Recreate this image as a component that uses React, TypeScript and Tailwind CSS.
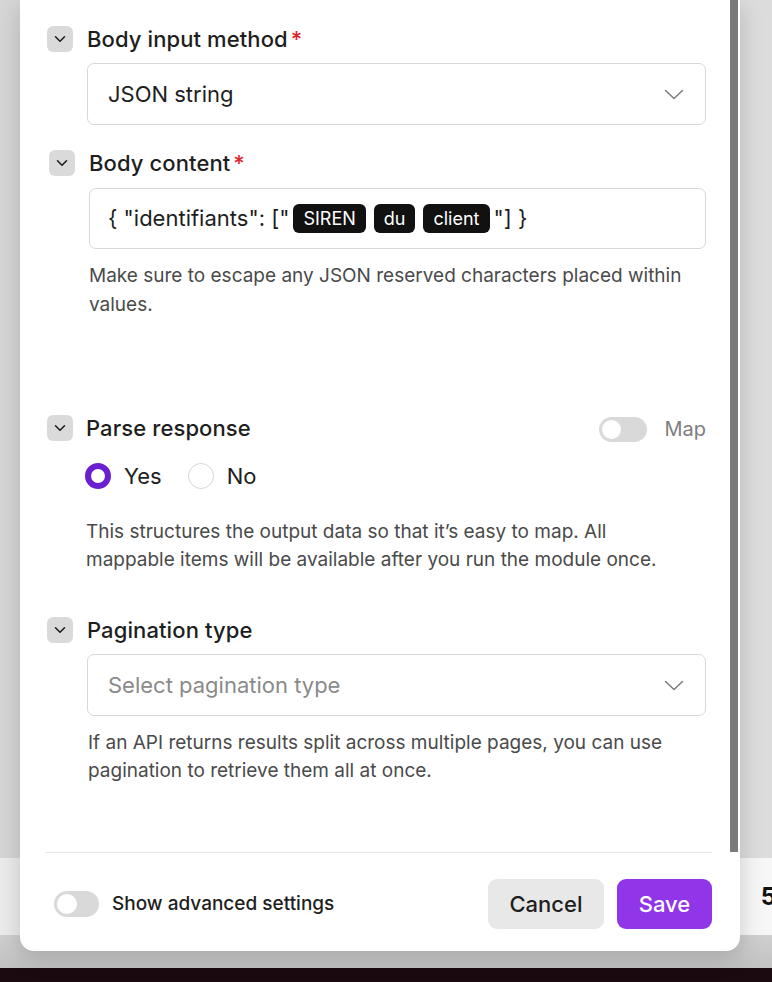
import React from "react";

const font = { fontFamily: "Inter, 'Noto Sans', sans-serif" };

function Caret() {
    return (
        <div className="w-[26px] h-[26px] rounded-[6px] bg-[#dadada] flex items-center justify-center shrink-0">
            <svg width="12" height="8" viewBox="0 0 12 8" fill="none">
                <path d="M1.5 1.75L6 6.25L10.5 1.75" stroke="#1f1f1f" strokeWidth="1.6" strokeLinecap="round" strokeLinejoin="round" />
            </svg>
        </div>
    );
}

function SelectChevron() {
    return (
        <svg width="20" height="11" viewBox="0 0 20 11" fill="none">
            <path d="M1.5 1.5L10 9.5L18.5 1.5" stroke="#7a7a7a" strokeWidth="1.5" strokeLinecap="round" strokeLinejoin="round" />
        </svg>
    );
}

function Header({ label, required, className = "" }: { label: string; required?: boolean; className?: string }) {
    return (
        <div className={`flex items-center h-[26px] gap-[14px] ${className}`}>
            <Caret />
            <span className="text-[22px] font-medium text-[#1e1e1e] leading-none tracking-[0.1px]">
                {label}
                {required && <span className="text-[#e0242b] ml-[3px]">*</span>}
            </span>
        </div>
    );
}

function Chip({ children }: { children: React.ReactNode }) {
    return (
        <span className="inline-flex items-center h-[29px] px-[10px] rounded-[6px] bg-[#111111] text-white text-[18px] mx-[4px]">
            {children}
        </span>
    );
}

function Toggle({ className = "" }: { className?: string }) {
    return (
        <div className={`rounded-full bg-[#d9d9d9] flex items-center p-[3px] ${className}`}>
            <div className="h-full aspect-square rounded-full bg-white" />
        </div>
    );
}

export default function App() {
    return (
        <div className="relative w-[772px] h-[982px] overflow-hidden bg-[#dddddd]" style={font}>
            {/* page behind the modal */}
            <div className="flex flex-col h-full">
                <div className="h-[858px] bg-gradient-to-r from-[#d6d6d6] via-[#e4e4e4] to-[#dcdcdc]" />
                <div className="h-[77px] bg-gradient-to-r from-[#ececec] to-[#f7f7f7] flex items-center justify-end">
                    <span className="text-[24px] font-bold text-[#111] mr-[-4px]">5</span>
                </div>
                <div className="h-[33px] bg-gradient-to-b from-[#cfcfcf] to-[#c2c2c2]" />
                <div className="flex-1 bg-[#1b0a10]" />
            </div>

            {/* modal */}
            <div className="absolute left-[20px] top-0 w-[720px] h-[951px] bg-white rounded-b-[14px] shadow-[0_6px_24px_rgba(0,0,0,0.18)] flex flex-col">
                <div className="flex h-[852px]">
                    <div className="flex-1 flex flex-col pl-[27px] pr-[24px] pt-[26px]">
                        <Header label="Body input method" required />
                        <div className="mt-[11px] ml-[40px] h-[62px] rounded-[7px] border border-[#d8d8d8] flex items-center justify-between pl-[20px] pr-[21px]">
                            <span className="text-[22px] text-[#1e1e1e]">JSON string</span>
                            <SelectChevron />
                        </div>

                        <Header label="Body content" required className="mt-[25px] ml-[2px]" />
                        <div className="mt-[12px] ml-[42px] h-[61px] rounded-[7px] border border-[#d8d8d8] flex items-center pl-[18px]">
                            <span className="text-[22px] text-[#1e1e1e] flex items-center">
                                {'{ "identifiants": ["'}
                                <Chip>SIREN</Chip>
                                <Chip>du</Chip>
                                <Chip>client</Chip>
                                {'"] }'}
                            </span>
                        </div>
                        <p className="mt-[12px] ml-[42px] text-[19px] leading-[29px] text-[#4a4a4a] pr-[10px]">
                            Make sure to escape any JSON reserved characters placed within values.
                        </p>

                        <div className="mt-[96px] h-[26px] flex items-center justify-between">
                            <div className="flex items-center h-[26px] gap-[13px]">
                                <Caret />
                                <span className="text-[22px] font-medium text-[#1e1e1e] leading-none tracking-[0.1px]">Parse response</span>
                            </div>
                            <div className="flex items-center gap-[17px] h-[26px] mt-[2px]">
                                <Toggle className="w-[48px] h-[25px]" />
                                <span className="text-[20px] leading-none text-[#7d7d7d]">Map</span>
                            </div>
                        </div>
                        <div className="mt-[22px] ml-[38px] flex items-center h-[26px]">
                            <div className="w-[26px] h-[26px] rounded-full border-[6px] border-[#6a1fd0] bg-white" />
                            <span className="ml-[13px] text-[22px] text-[#1e1e1e]">Yes</span>
                            <div className="ml-[26px] w-[26px] h-[26px] rounded-full border border-[#d6d6d6] bg-white" />
                            <span className="ml-[13px] text-[22px] text-[#1e1e1e]">No</span>
                        </div>
                        <p className="mt-[29px] ml-[39px] max-w-[590px] text-[19px] leading-[28px] text-[#4a4a4a]">
                            This structures the output data so that it’s easy to map. All mappable items will be available after you run the module once.
                        </p>

                        <Header label="Pagination type" className="mt-[43px]" />
                        <div className="mt-[11px] ml-[40px] h-[62px] rounded-[7px] border border-[#d8d8d8] flex items-center justify-between pl-[20px] pr-[21px]">
                            <span className="text-[22px] text-[#8a8a8a]">Select pagination type</span>
                            <SelectChevron />
                        </div>
                        <p className="mt-[13px] ml-[41px] text-[19px] leading-[28px] text-[#4a4a4a]">
                            If an API returns results split across multiple pages, you can use pagination to retrieve them all at once.
                        </p>
                    </div>
                    <div className="w-[8px] bg-[#7a7a7a] mr-[2px]" />
                </div>

                <div className="mx-[26px] mr-[28px] border-t border-[#e6e6e6] flex-1 flex items-center justify-between pt-[4px]">
                    <div className="flex items-center gap-[13px] ml-[8px]">
                        <Toggle className="w-[45px] h-[26px]" />
                        <span className="text-[19px] font-medium text-[#1e1e1e]">Show advanced settings</span>
                    </div>
                    <div className="flex items-center gap-[13px]">
                        <button className="h-[50px] w-[116px] rounded-[9px] bg-[#e8e8e8] text-[22px] font-medium text-[#1e1e1e]">
                            Cancel
                        </button>
                        <button className="h-[50px] w-[95px] rounded-[9px] bg-[#9036e8] text-[22px] font-medium text-white">
                            Save
                        </button>
                    </div>
                </div>
            </div>
        </div>
    );
}
